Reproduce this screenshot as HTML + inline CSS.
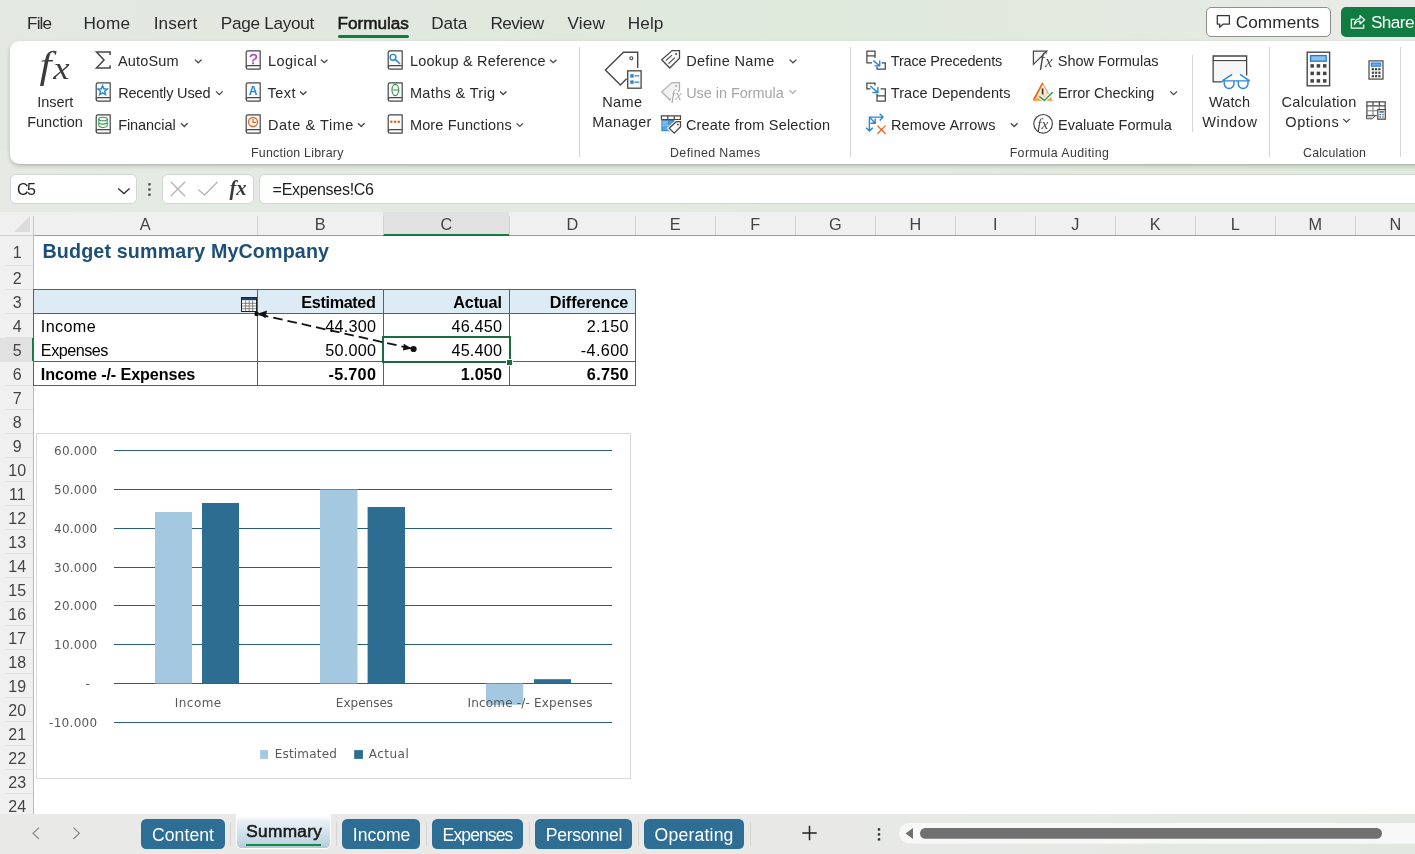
<!DOCTYPE html>
<html lang="en">
<head>
<meta charset="utf-8">
<title>Budget summary MyCompany - Excel</title>
<style>
html,body{margin:0;padding:0;}
body{width:1415px;height:854px;overflow:hidden;position:relative;background:linear-gradient(90deg,#e3e8e2 0%,#e2e8e0 22%,#dfe9dc 55%,#e3e9e0 80%,#e9ebe8 100%);font-family:"Liberation Sans",sans-serif;}
.t{position:absolute;white-space:pre;line-height:1;}
.a{position:absolute;}
svg{position:absolute;overflow:visible;}
/* ribbon */
#ribbon{left:10px;top:40.8px;width:1420px;height:123px;background:#fff;border-radius:9px 0 0 9px;box-shadow:0 2px 4px rgba(0,0,0,.20),0 1px 1px rgba(0,0,0,.06);}
.sep{width:1px;background:#d4d4d4;}
.tabul{left:338px;top:35px;width:70.5px;height:3px;border-radius:2px;background:#107c41;}
#comments{left:1206.4px;top:7.2px;width:122.4px;height:27.6px;border:1px solid #8e8e8e;border-radius:5px;background:#fff;}
#share{left:1341px;top:7.2px;width:90px;height:29.6px;border-radius:5px;background:#107c41;}
/* formula bar */
.fbox{background:#fff;border-radius:5.5px;top:174.3px;height:29.9px;box-shadow:inset 0 0 0 1px #d3d5d2;}
/* grid */
#gridbg{left:0;top:212px;width:1415px;height:602px;background:#fff;}
#colhdr{left:0;top:212px;width:1415px;height:23px;background:#f0f0f0;border-bottom:1px solid #9b9b9b;}
#rowhdr{left:0;top:236px;width:33px;height:578px;background:#f0f0f0;border-right:1px solid #b9b9b9;}
.cs{top:216px;width:1px;height:19px;background:#d2d2d2;}
.rs{left:6px;height:1px;width:27px;background:#e0e0e0;}
/* table */
.hl{height:1px;background:#2e6c97;}
.vl{width:1px;background:#2e6c97;}
/* sheet tabs */
#tabbar{left:0;top:814px;width:1415px;height:40px;background:linear-gradient(90deg,#e9e9e8 0%,#e8e9e7 60%,#e2e8e0 100%);}
.st{top:819px;height:30px;background:#2e6e95;border-radius:5.2px;}
.ts{top:822px;width:1px;height:24px;background:#d4d4d4;}
</style>
</head>
<body>
<!-- ===== ribbon tab strip ===== -->
<div class="a tabul"></div>
<div class="a" id="comments"></div>
<div class="a" id="share"></div>
<div class="a" style="left:0;top:150px;width:1415px;height:62px;background:linear-gradient(90deg,#e6e9e4 0%,#e4e9e2 45%,#dfe9dc 100%)"></div>
<!-- ===== ribbon ===== -->
<div class="a" id="ribbon"></div>
<div class="a sep" style="left:579px;top:47px;height:110px"></div>
<div class="a sep" style="left:850px;top:47px;height:110px"></div>
<div class="a sep" style="left:1192px;top:55px;height:77px"></div>
<div class="a sep" style="left:1269px;top:47px;height:110px"></div>
<div class="a sep" style="left:1400px;top:47px;height:110px"></div>
<!-- ===== formula bar ===== -->
<div class="a fbox" style="left:10.2px;width:126.8px"></div>
<div class="a fbox" style="left:162.4px;width:91.6px"></div>
<div class="a fbox" style="left:259.4px;width:1170px"></div>
<svg class="a" style="left:0;top:0;will-change:transform" width="1415" height="854" viewBox="0 0 1415 854" fill="none">
<path d="M110.2 82.8 H97.9 Q96.2 82.8 96.2 84.5 V99.4 Q96.2 101.1 98.0 101.1 H110.2 V82.8 Z" fill="#fbfbfb" stroke="#474747" stroke-width="1.2" stroke-linejoin="round"/><path d="M110.2 97.6 H98.2 Q96.2 97.6 96.2 99.4" stroke="#474747" stroke-width="1.2"/>
<path d="M110.2 114.8 H97.9 Q96.2 114.8 96.2 116.5 V131.4 Q96.2 133.1 98.0 133.1 H110.2 V114.8 Z" fill="#fbfbfb" stroke="#474747" stroke-width="1.2" stroke-linejoin="round"/><path d="M110.2 129.6 H98.2 Q96.2 129.6 96.2 131.4" stroke="#474747" stroke-width="1.2"/>
<path d="M260.2 50.8 H247.9 Q246.2 50.8 246.2 52.5 V67.4 Q246.2 69.1 248.0 69.1 H260.2 V50.8 Z" fill="#fbfbfb" stroke="#474747" stroke-width="1.2" stroke-linejoin="round"/><path d="M260.2 65.6 H248.2 Q246.2 65.6 246.2 67.4" stroke="#474747" stroke-width="1.2"/>
<path d="M260.2 82.8 H247.9 Q246.2 82.8 246.2 84.5 V99.4 Q246.2 101.1 248.0 101.1 H260.2 V82.8 Z" fill="#fbfbfb" stroke="#474747" stroke-width="1.2" stroke-linejoin="round"/><path d="M260.2 97.6 H248.2 Q246.2 97.6 246.2 99.4" stroke="#474747" stroke-width="1.2"/>
<path d="M260.2 114.8 H247.9 Q246.2 114.8 246.2 116.5 V131.4 Q246.2 133.1 248.0 133.1 H260.2 V114.8 Z" fill="#fbfbfb" stroke="#474747" stroke-width="1.2" stroke-linejoin="round"/><path d="M260.2 129.6 H248.2 Q246.2 129.6 246.2 131.4" stroke="#474747" stroke-width="1.2"/>
<path d="M402.2 50.8 H389.9 Q388.2 50.8 388.2 52.5 V67.4 Q388.2 69.1 390.0 69.1 H402.2 V50.8 Z" fill="#fbfbfb" stroke="#474747" stroke-width="1.2" stroke-linejoin="round"/><path d="M402.2 65.6 H390.2 Q388.2 65.6 388.2 67.4" stroke="#474747" stroke-width="1.2"/>
<path d="M402.2 82.8 H389.9 Q388.2 82.8 388.2 84.5 V99.4 Q388.2 101.1 390.0 101.1 H402.2 V82.8 Z" fill="#fbfbfb" stroke="#474747" stroke-width="1.2" stroke-linejoin="round"/><path d="M402.2 97.6 H390.2 Q388.2 97.6 388.2 99.4" stroke="#474747" stroke-width="1.2"/>
<path d="M402.2 114.8 H389.9 Q388.2 114.8 388.2 116.5 V131.4 Q388.2 133.1 390.0 133.1 H402.2 V114.8 Z" fill="#fbfbfb" stroke="#474747" stroke-width="1.2" stroke-linejoin="round"/><path d="M402.2 129.6 H390.2 Q388.2 129.6 388.2 131.4" stroke="#474747" stroke-width="1.2"/>
<path d="M110.1 55 V52.1 H96.5 L104 60.1 L96.5 68 H110.1 V65.2" stroke="#474747" stroke-width="1.5" stroke-linejoin="miter"/>
<polygon points="102.60,85.70 103.89,88.82 107.26,89.09 104.69,91.28 105.48,94.56 102.60,92.80 99.72,94.56 100.51,91.28 97.94,89.09 101.31,88.82" stroke="#2a86d6" stroke-width="1.4" stroke-linejoin="miter"/>
<path d="M98.8 119 V125.6 A4.2 1.8 0 0 0 107.2 125.6 V119 M98.8 122.3 A4.2 1.8 0 0 0 107.2 122.3" stroke="#2f9b50" stroke-width="1.05"/><ellipse cx="103" cy="119" rx="4.2" ry="1.8" stroke="#2f9b50" stroke-width="1.05"/>
<text x="253.2" y="63.7" font-family="Liberation Sans, sans-serif" font-size="15.5" fill="#a63fc6" stroke="#a63fc6" stroke-width="0.3" text-anchor="middle">?</text>
<text x="253.1" y="94.5" font-family="Liberation Sans, sans-serif" font-size="12.2" font-weight="bold" fill="#2a86d6" text-anchor="middle">A</text>
<circle cx="253" cy="122" r="4.5" stroke="#e8651c" stroke-width="1.3"/><path d="M253 119 V122.3 H256.2" stroke="#e8651c" stroke-width="1.2"/>
<circle cx="393" cy="57.3" r="2.9" stroke="#2a86d6" stroke-width="1.4"/><path d="M395.2 59.4 L399.6 63.5" stroke="#2a86d6" stroke-width="1.5" stroke-linecap="round"/>
<ellipse cx="395.3" cy="90" rx="3.3" ry="5.6" stroke="#2f9b50" stroke-width="1.2"/><path d="M393.2 90 H399.4" stroke="#8a8a8a" stroke-width="1.3"/>
<circle cx="391.4" cy="121.7" r="1.3" fill="#e8651c"/>
<circle cx="395.1" cy="121.7" r="1.3" fill="#e8651c"/>
<circle cx="398.8" cy="121.7" r="1.3" fill="#e8651c"/>
<path d="M195.0 59.6 L198.3 62.8 L201.6 59.6" stroke="#474747" stroke-width="1.3"/>
<path d="M216.0 91.4 L219.3 94.6 L222.6 91.4" stroke="#474747" stroke-width="1.3"/>
<path d="M181.0 123.3 L184.3 126.5 L187.6 123.3" stroke="#474747" stroke-width="1.3"/>
<path d="M321.0 59.7 L324.2 62.7 L327.4 59.7" stroke="#474747" stroke-width="1.3"/>
<path d="M300.0 91.5 L303.2 94.5 L306.4 91.5" stroke="#474747" stroke-width="1.3"/>
<path d="M358.0 123.3 L361.3 126.5 L364.6 123.3" stroke="#474747" stroke-width="1.3"/>
<path d="M550.0 59.7 L553.2 62.7 L556.5 59.7" stroke="#474747" stroke-width="1.3"/>
<path d="M500.0 91.5 L503.2 94.5 L506.4 91.5" stroke="#474747" stroke-width="1.3"/>
<path d="M516.6 123.4 L519.8 126.4 L523.0 123.4" stroke="#474747" stroke-width="1.3"/>
<path d="M789.6 59.6 L793.0 62.8 L796.4 59.6" stroke="#474747" stroke-width="1.3"/>
<path d="M789.4 90.2 L792.7 93.4 L796.0 90.2" stroke="#b0b0b0" stroke-width="1.3"/>
<path d="M1010.8 123.3 L1014.2 126.5 L1017.6 123.3" stroke="#474747" stroke-width="1.3"/>
<path d="M1170.2 91.4 L1173.6 94.6 L1177.0 91.4" stroke="#474747" stroke-width="1.3"/>
<path d="M1343.2 118.9 L1346.5 122.1 L1349.8 118.9" stroke="#474747" stroke-width="1.3"/>
<path d="M626.6 78.8 L620.4 84.9 L605.4 70 L623.5 52.2 H637.7 V68" stroke="#474747" stroke-width="1.4" stroke-linejoin="miter"/>
<circle cx="631.3" cy="58.3" r="1.5" stroke="#474747" stroke-width="1.1"/>
<rect x="627.7" y="70.8" width="13.4" height="17.4" fill="#fbfbfb" stroke="#474747" stroke-width="1.3"/>
<rect x="630.3" y="74.2" width="3.4" height="3.4" fill="#2a86d6"/><rect x="630.3" y="80.4" width="3.4" height="3.4" fill="#2a86d6"/>
<path d="M634.6 75.9 H639.3 M634.6 82.1 H639.3" stroke="#2a86d6" stroke-width="1.2"/>
<path d="M679.5 50.6 H672.1 L661.7 59.8 L669.8 68.0 L679.5 58.3 Z" fill="#fbfbfb" stroke="#474747" stroke-width="1.3" stroke-linejoin="miter"/><circle cx="676.1" cy="54.0" r="1.05" fill="#474747"/><path d="M665.9 60.6 L672.0 55.1 M668.5 63.6 L674.9 57.7" stroke="#474747" stroke-width="1.1"/>
<path d="M679.5 82.6 H672.1 L661.7 91.8 L669.8 100.0 L679.5 90.3 Z" fill="#f1f1f1" stroke="#b2b2b2" stroke-width="1.3" stroke-linejoin="miter"/><circle cx="676.1" cy="86.0" r="1.05" fill="#b2b2b2"/>
<text x="671.2" y="100.2" font-family="Liberation Serif, serif" font-style="italic" font-size="14.5" fill="#a8a8a8" stroke="#fff" stroke-width="2" paint-order="stroke">fx</text>
<rect x="661.4" y="119.6" width="12.8" height="11.6" fill="#1f78d1"/>
<path d="M661.4 125.4 H674 M667.8 119.6 V131.2" stroke="#8fc3ee" stroke-width="1"/>
<rect x="662.2" y="120.4" width="5" height="4.4" fill="#7db8ea"/><rect x="662.2" y="126" width="5" height="4.4" fill="#5aa4e4"/><rect x="668.4" y="120.4" width="5" height="4.4" fill="#4b9be0"/>
<path d="M661.4 119.6 V115.8 H680.5 V121.5 M661.4 119.6 H680.5 M667.8 115.8 V119.6 M674.3 115.8 V119.6" stroke="#474747" stroke-width="1.2"/>
<path d="M680.5 121.7 H676.2 L669.2 128.2 L674.2 133.2 L680.5 126.8 Z" fill="#fbfbfb" stroke="#fff" stroke-width="3.4"/>
<path d="M680.5 121.7 H676.2 L669.2 128.2 L674.2 133.2 L680.5 126.8 Z" fill="#fbfbfb" stroke="#474747" stroke-width="1.25"/>
<circle cx="677.9" cy="124.4" r="0.9" fill="#474747"/>
<path d="M872 62.9 H866.9 V51 H875 V58 M866.9 55.9 H875" stroke="#474747" stroke-width="1.25"/>
<path d="M881.6 62.9 H885.3 V69 H877.1 V66.6" stroke="#474747" stroke-width="1.25"/>
<path d="M873.4 60.6 L879.6 65.8 M879.7 60.6 V65.9 H874.4" stroke="#2a86d6" stroke-width="1.4"/>
<path d="M870.6 88.9 H866.9 V83.2 H875 V85.6" stroke="#474747" stroke-width="1.25"/>
<path d="M880.6 88.8 H885.3 V101 H877 V93.8 M877 95.9 H885.3" stroke="#474747" stroke-width="1.25"/>
<path d="M870.2 86 L877.8 92.4 M877.9 87 V92.5 H872.4" stroke="#2a86d6" stroke-width="1.4"/>
<path d="M869.4 131 V117.1 H882.6 M879.7 113.8 L883 117.1 L879.7 120.4 M866.1 127.8 L869.4 131.1 L872.7 127.8 M869.6 117.3 L875 123 M875.2 118.6 V123.2 H870.6" stroke="#2a86d6" stroke-width="1.4"/>
<path d="M877.4 125.6 L885.5 133.7 M885.5 125.6 L877.4 133.7" stroke="#e8651c" stroke-width="1.3"/>
<path d="M1033.4 51.2 H1046.9 L1033.4 64.4 Z" fill="#f3f3f3" stroke="#474747" stroke-width="1.2"/>
<text x="1039.6" y="66.0" font-family="Liberation Serif, serif" font-style="italic" fill="#4d4d4d"><tspan font-size="18.5">f</tspan><tspan font-size="17.2" dx="0.2" dy="0.9">x</tspan></text>
<defs><linearGradient id="eg" x1="0" y1="0" x2="0" y2="1"><stop offset="0" stop-color="#ffffff"/><stop offset="0.55" stop-color="#fdebd3"/><stop offset="1" stop-color="#f7be80"/></linearGradient></defs>
<path d="M1042.6 83.2 L1033.6 100 H1051.8 Z" fill="url(#eg)" stroke="#f0a050" stroke-width="1.2" stroke-linejoin="miter"/>
<path d="M1042.6 83.2 L1033.6 100" stroke="#e8651c" stroke-width="1.6"/>
<path d="M1033.6 100 H1051.8" stroke="#f3a043" stroke-width="1.5"/>
<path d="M1042.6 88.4 V94.4" stroke="#333" stroke-width="1.7"/>
<path d="M1039.4 96.6 L1044.5 100.4 L1052.6 92.2" stroke="#fff" stroke-width="3.6"/>
<path d="M1039.4 96.6 L1044.5 100.4 L1052.6 92.2" stroke="#2a8f4c" stroke-width="1.4"/>
<circle cx="1043.1" cy="123.8" r="9.3" stroke="#474747" stroke-width="1.2"/>
<text x="1037.3" y="128.6" font-family="Liberation Serif, serif" font-style="italic" font-size="15.5" fill="#474747">fx</text>
<path d="M1222.4 81.8 H1213.2 V56 H1246.6 V75.4 M1213.2 60.8 H1246.6" fill="none" stroke="#474747" stroke-width="1.4"/>
<path d="M1213.9 61.2 H1245.9 V75.4 L1240 74 L1232.2 74 L1222.4 81.2 H1213.9 Z" fill="#f7f7f7"/>
<path d="M1222.2 80.9 H1249.8 M1222.6 80.6 L1232.2 74.4 M1249.4 80.6 L1240 74.4" stroke="#2a86d6" stroke-width="1.4"/>
<path d="M1224.2 81 V83.6 A4.9 4.9 0 0 0 1234 83.6 V81 M1238.2 81 V83.6 A4.9 4.9 0 0 0 1248 83.6 V81" stroke="#2a86d6" stroke-width="1.4"/>
<rect x="1307.2" y="52.2" width="22.4" height="33.6" fill="#fcfcfc" stroke="#474747" stroke-width="1.4"/>
<rect x="1310.6" y="55.6" width="15.6" height="5.6" fill="#8fc1ea" stroke="#1f78d1" stroke-width="1.3"/>
<rect x="1310.45" y="64.15" width="3.5" height="3.5" fill="#444"/>
<rect x="1310.45" y="71.65" width="3.5" height="3.5" fill="#444"/>
<rect x="1310.45" y="79.15" width="3.5" height="3.5" fill="#444"/>
<rect x="1316.65" y="64.15" width="3.5" height="3.5" fill="#444"/>
<rect x="1316.65" y="71.65" width="3.5" height="3.5" fill="#444"/>
<rect x="1316.65" y="79.15" width="3.5" height="3.5" fill="#444"/>
<rect x="1322.95" y="64.15" width="3.5" height="3.5" fill="#444"/>
<rect x="1322.95" y="71.65" width="3.5" height="3.5" fill="#444"/>
<rect x="1322.95" y="79.15" width="3.5" height="3.5" fill="#444"/>
<rect x="1369.0" y="60.9" width="14.0" height="18.2" fill="#fcfcfc" stroke="#474747" stroke-width="1.2"/>
<rect x="1371.3" y="63" width="9.4" height="3.2" fill="#6fb0e6" stroke="#1f78d1" stroke-width="1"/>
<rect x="1371.80" y="68.10" width="2.2" height="2.2" fill="#444"/>
<rect x="1371.80" y="71.60" width="2.2" height="2.2" fill="#444"/>
<rect x="1371.80" y="75.10" width="2.2" height="2.2" fill="#444"/>
<rect x="1375.00" y="68.10" width="2.2" height="2.2" fill="#444"/>
<rect x="1375.00" y="71.60" width="2.2" height="2.2" fill="#444"/>
<rect x="1375.00" y="75.10" width="2.2" height="2.2" fill="#444"/>
<rect x="1378.30" y="68.10" width="2.2" height="2.2" fill="#444"/>
<rect x="1378.30" y="71.60" width="2.2" height="2.2" fill="#444"/>
<rect x="1378.30" y="75.10" width="2.2" height="2.2" fill="#444"/>
<path d="M1366.9 118.4 V101.9 H1385.2 V109 M1366.9 105.8 H1385.2 M1373 101.9 V105.8 M1379.3 101.9 V105.8" stroke="#474747" stroke-width="1.2"/>
<path d="M1366.9 110.7 H1377 M1366.9 115.6 H1377 M1373 105.8 V115.6 M1379.3 105.8 V109" stroke="#808080" stroke-width="1.1"/>
<path d="M1366.6 115.4 H1375.6 L1372.4 118.8 H1366.6 Z" fill="#d0d0d0" stroke="#555" stroke-width="1"/>
<rect x="1377.8" y="109.6" width="7.5" height="9.6" fill="#fcfcfc" stroke="#474747" stroke-width="1.2"/>
<rect x="1379.4" y="111" width="4.4" height="1.8" fill="#2a86d6"/>
<rect x="1379.50" y="113.90" width="1.4" height="1.4" fill="#555"/>
<rect x="1379.50" y="116.30" width="1.4" height="1.4" fill="#555"/>
<rect x="1382.30" y="113.90" width="1.4" height="1.4" fill="#555"/>
<rect x="1382.30" y="116.30" width="1.4" height="1.4" fill="#555"/>
<path d="M1217.3 15.7 H1229.4 V24 H1223.3 L1219.6 27.2 V24 H1217.3 Z" stroke="#333" stroke-width="1.25" stroke-linejoin="round"/>
<path d="M1354.6 19.4 H1351.4 V28.2 H1363.6 V24.6" stroke="#fff" stroke-width="1.3"/>
<path d="M1354.4 24.6 C1354.8 20.6 1357 18.6 1360 18.6 V15.6 L1364.6 19.8 L1360 24 V21 C1357.6 21 1355.8 22 1354.4 24.6 Z" stroke="#fff" stroke-width="1.2" stroke-linejoin="round"/>
<path d="M118.2 188.4 L123.9 193.6 L129.6 188.4" stroke="#333" stroke-width="1.35"/>
<rect x="148.3" y="183.15" width="2.3" height="2.3" fill="#444"/>
<rect x="148.3" y="188.35" width="2.3" height="2.3" fill="#444"/>
<rect x="148.3" y="193.55" width="2.3" height="2.3" fill="#444"/>
<path d="M170.7 181.8 L185.1 196.2 M185.1 181.8 L170.7 196.2" stroke="#b4b4b4" stroke-width="1.3"/>
<path d="M198.2 189.6 L204.6 195 L217.6 181.8" stroke="#b4b4b4" stroke-width="1.3"/>
<text x="229.4" y="194.6" font-family="Liberation Serif, serif" font-style="italic" font-weight="bold" font-size="20.5" fill="#3a3a3a">fx</text>
<text x="39.4" y="77.8" transform="translate(39.4 0) scale(1.13 1) translate(-39.4 0)" font-family="Liberation Serif, serif" font-style="italic" fill="#3c3c3c"><tspan font-size="38.5">f</tspan><tspan font-size="32.5" dx="1.6" dy="1.3">x</tspan></text>
</svg>
<!-- ===== grid ===== -->
<div class="a" id="gridbg"></div>
<div class="a" id="colhdr"></div>
<div class="a" id="rowhdr"></div>
<div class="a" style="left:383px;top:212px;width:126px;height:22px;background:#e1e1e1;border-bottom:2px solid #107c41"></div>
<div class="a" style="left:0;top:338px;width:32px;height:24px;background:#e1e1e1;border-right:2px solid #107c41"></div>
<svg class="a" style="left:8px;top:215px" width="24" height="19" viewBox="0 0 24 19"><path d="M22 1 V17 H6 Z" fill="#dcdcdc"/></svg>
<div class="a" style="left:33px;top:216px;width:1px;height:20px;background:#c8c8c8"></div><div class="a" style="left:0;top:235px;width:33px;height:1px;background:#cfcfcf"></div><div class="a cs" style="left:257px"></div><div class="a cs" style="left:383px"></div><div class="a cs" style="left:509px"></div><div class="a cs" style="left:635px"></div><div class="a cs" style="left:715px"></div><div class="a cs" style="left:795px"></div><div class="a cs" style="left:875px"></div><div class="a cs" style="left:955px"></div><div class="a cs" style="left:1035px"></div><div class="a cs" style="left:1115px"></div><div class="a cs" style="left:1195px"></div><div class="a cs" style="left:1275px"></div><div class="a cs" style="left:1355px"></div><div class="a rs" style="top:265px"></div><div class="a rs" style="top:289px"></div><div class="a rs" style="top:313px"></div><div class="a rs" style="top:337px"></div><div class="a rs" style="top:361px"></div><div class="a rs" style="top:385px"></div><div class="a rs" style="top:409px"></div><div class="a rs" style="top:433px"></div><div class="a rs" style="top:457px"></div><div class="a rs" style="top:481px"></div><div class="a rs" style="top:505px"></div><div class="a rs" style="top:529px"></div><div class="a rs" style="top:553px"></div><div class="a rs" style="top:577px"></div><div class="a rs" style="top:601px"></div><div class="a rs" style="top:625px"></div><div class="a rs" style="top:649px"></div><div class="a rs" style="top:673px"></div><div class="a rs" style="top:697px"></div><div class="a rs" style="top:721px"></div><div class="a rs" style="top:745px"></div><div class="a rs" style="top:769px"></div><div class="a rs" style="top:793px"></div><div class="a rs" style="top:817px"></div>
<!-- ===== table ===== -->
<div class="a" style="left:34px;top:290px;width:601px;height:23px;background:#ddebf4"></div>
<div class="a hl" style="left:33px;top:289px;width:603px"></div>
<div class="a hl" style="left:33px;top:313px;width:603px"></div>
<div class="a hl" style="left:33px;top:361px;width:603px"></div>
<div class="a hl" style="left:33px;top:385px;width:603px"></div>
<div class="a vl" style="left:33px;top:289px;height:97px"></div>
<div class="a vl" style="left:257px;top:289px;height:97px"></div>
<div class="a vl" style="left:383px;top:289px;height:97px"></div>
<div class="a vl" style="left:509px;top:289px;height:97px"></div>
<div class="a vl" style="left:635px;top:289px;height:97px"></div>
<!-- selected cell -->
<div class="a" style="left:382px;top:336px;width:125px;height:23px;border:2px solid #1b6b3f"></div>
<div class="a" style="left:505.5px;top:358.5px;width:5px;height:5px;background:#1b6b3f;border:1px solid #fff"></div>
<svg class="a" style="left:0;top:0" width="1415" height="854" viewBox="0 0 1415 854" fill="none">
<rect x="241.5" y="297.5" width="15" height="14" fill="#fff" stroke="#222" stroke-width="1"/>
<rect x="242" y="298" width="14" height="2.2" fill="#1f3f7a"/>
<path d="M242 303.3 H256 M242 306 H256 M242 308.7 H256 M245.7 300.5 V311 M249.2 300.5 V311 M252.7 300.5 V311" stroke="#666" stroke-width="0.8"/>
<path d="M257 314 L413.6 349" stroke="#111" stroke-width="1.8" stroke-dasharray="9.6 5.0" stroke-dashoffset="-2"/>
<circle cx="256.6" cy="313.9" r="2.3" fill="#111"/>
<path d="M258.4 313.6 L267 310.6 L265.6 318.2 Z" fill="#111"/>
<circle cx="413.6" cy="349" r="3.1" fill="#111"/>
<path d="M411.8 348.6 L403.8 343.8 L403 350.4 Z" fill="#111"/>
</svg>
<!-- ===== chart ===== -->
<div class="a" style="left:36px;top:433px;width:593px;height:344px;background:#fff;border:1px solid #d9d9d9"></div>
<svg class="a" style="left:0;top:0" width="1415" height="854" viewBox="0 0 1415 854"><line x1="113.5" x2="611.5" y1="450.5" y2="450.5" stroke="#2b5d83" stroke-width="1" shape-rendering="crispEdges"/><line x1="113.5" x2="611.5" y1="489.5" y2="489.5" stroke="#2b5d83" stroke-width="1" shape-rendering="crispEdges"/><line x1="113.5" x2="611.5" y1="528.5" y2="528.5" stroke="#2b5d83" stroke-width="1" shape-rendering="crispEdges"/><line x1="113.5" x2="611.5" y1="567.5" y2="567.5" stroke="#2b5d83" stroke-width="1" shape-rendering="crispEdges"/><line x1="113.5" x2="611.5" y1="605.5" y2="605.5" stroke="#2b5d83" stroke-width="1" shape-rendering="crispEdges"/><line x1="113.5" x2="611.5" y1="644.5" y2="644.5" stroke="#2b5d83" stroke-width="1" shape-rendering="crispEdges"/><line x1="113.5" x2="611.5" y1="683.5" y2="683.5" stroke="#2b5d83" stroke-width="1" shape-rendering="crispEdges"/><line x1="113.5" x2="611.5" y1="722.5" y2="722.5" stroke="#2b5d83" stroke-width="1" shape-rendering="crispEdges"/><rect x="155" y="512.0" width="37" height="171.5" fill="#a5c8e1"/><rect x="202" y="503.0" width="37" height="180.5" fill="#2e6d92"/><rect x="320" y="489.6" width="37.5" height="193.9" fill="#a5c8e1"/><rect x="367.6" y="507.0" width="37.39999999999998" height="176.5" fill="#2e6d92"/><rect x="486" y="683.5" width="37.200000000000045" height="21.3" fill="#a5c8e1"/><rect x="534" y="679.2" width="37" height="4.3" fill="#2e6d92"/><rect x="260.1" y="750.1" width="7.9" height="8.8" fill="#a5c8e1"/><rect x="354.2" y="750.1" width="8.7" height="8.8" fill="#2e6d92"/></svg>
<!-- ===== sheet tabs ===== -->
<div class="a" id="tabbar"></div>
<div class="a st" style="left:141px;width:84px"></div><div class="a st" style="left:342px;width:78px"></div><div class="a st" style="left:432px;width:91px"></div><div class="a st" style="left:535px;width:97px"></div><div class="a st" style="left:644px;width:99.5px"></div><div class="a" style="left:235.6px;top:812px;width:95.6px;height:37px;border-radius:0 0 6px 6px;background:#fff"></div><div class="a" style="left:236.8px;top:814px;width:93.4px;height:34px;border-radius:0 0 4.5px 4.5px;background:linear-gradient(#ffffff 0%,#ffffff 6%,#e6eff5 22%,#d3e1eb 55%,#c0d4e1 85%,#afc8d8 100%)"></div><div class="a" style="left:246px;top:843.9px;width:75px;height:2.2px;background:#138a45"></div><div class="a ts" style="left:230px"></div><div class="a ts" style="left:336px"></div><div class="a ts" style="left:426px"></div><div class="a ts" style="left:529px"></div><div class="a ts" style="left:638px"></div><div class="a ts" style="left:749.5px"></div><svg class="a" style="left:0;top:0" width="1415" height="854" viewBox="0 0 1415 854" fill="none"><path d="M39 827.6 L33 833.3 L39 839" stroke="#8c8c8c" stroke-width="1.25"/><path d="M73.4 827.6 L79.4 833.3 L73.4 839" stroke="#8c8c8c" stroke-width="1.25"/><path d="M802.3 833 H816.7 M809.5 825.8 V840.2" stroke="#222" stroke-width="1.5"/><rect x="877.8" y="828.2" width="2.4" height="2.4" fill="#333"/><rect x="877.8" y="833.2" width="2.4" height="2.4" fill="#333"/><rect x="877.8" y="838.2" width="2.4" height="2.4" fill="#333"/><rect x="899" y="823" width="540" height="20.5" rx="10.2" fill="#f7f8f7"/><path d="M913 828 V839 L905.6 833.4 Z" fill="#707070"/><rect x="920" y="828" width="462" height="10.8" rx="5.4" fill="#707070"/></svg>
<!-- ===== texts ===== -->
<div class="a" style="left:0;top:0;width:1415px;height:854px;will-change:transform"><span class="t" style="top:15.14px;font-size:17.2px;color:#2a2a2a;letter-spacing:-0.885px;left:27.03px;">File</span>
<span class="t" style="top:15.14px;font-size:17.2px;color:#2a2a2a;letter-spacing:0.263px;left:83.43px;">Home</span>
<span class="t" style="top:15.14px;font-size:17.2px;color:#2a2a2a;letter-spacing:0.090px;left:153.73px;">Insert</span>
<span class="t" style="top:15.14px;font-size:17.2px;color:#2a2a2a;letter-spacing:-0.318px;left:220.83px;">Page Layout</span>
<span class="t" style="top:15.14px;font-size:17.2px;color:#1a1a1a;letter-spacing:-0.028px;left:337.53px;-webkit-text-stroke:0.55px #1a1a1a;">Formulas</span>
<span class="t" style="top:15.14px;font-size:17.2px;color:#2a2a2a;letter-spacing:-0.088px;left:431.23px;">Data</span>
<span class="t" style="top:15.14px;font-size:17.2px;color:#2a2a2a;letter-spacing:-0.542px;left:490.43px;">Review</span>
<span class="t" style="top:15.14px;font-size:17.2px;color:#2a2a2a;letter-spacing:0.198px;left:567.43px;">View</span>
<span class="t" style="top:15.14px;font-size:17.2px;color:#2a2a2a;letter-spacing:0.063px;left:627.83px;">Help</span>
<span class="t" style="top:13.94px;font-size:17.2px;color:#2a2a2a;letter-spacing:0.079px;left:1235.73px;">Comments</span>
<span class="t" style="top:13.94px;font-size:17.2px;color:#fff;letter-spacing:-0.557px;left:1370.93px;">Share</span>
<span class="t" style="top:94.73px;font-size:14.5px;color:#2a2a2a;letter-spacing:-0.032px;left:37.15px;">Insert</span>
<span class="t" style="top:114.93px;font-size:14.5px;color:#2a2a2a;letter-spacing:0.011px;left:27.15px;">Function</span>
<span class="t" style="top:53.93px;font-size:14.5px;color:#2a2a2a;letter-spacing:0.175px;left:117.95px;">AutoSum</span>
<span class="t" style="top:85.83px;font-size:14.5px;color:#2a2a2a;letter-spacing:-0.166px;left:118.15px;">Recently Used</span>
<span class="t" style="top:117.73px;font-size:14.5px;color:#2a2a2a;letter-spacing:-0.066px;left:118.15px;">Financial</span>
<span class="t" style="top:53.93px;font-size:14.5px;color:#2a2a2a;letter-spacing:0.459px;left:267.95px;">Logical</span>
<span class="t" style="top:85.83px;font-size:14.5px;color:#2a2a2a;letter-spacing:0.504px;left:267.55px;">Text</span>
<span class="t" style="top:117.73px;font-size:14.5px;color:#2a2a2a;letter-spacing:0.572px;left:267.95px;">Date &amp; Time</span>
<span class="t" style="top:53.93px;font-size:14.5px;color:#2a2a2a;letter-spacing:0.206px;left:409.95px;">Lookup &amp; Reference</span>
<span class="t" style="top:85.83px;font-size:14.5px;color:#2a2a2a;letter-spacing:0.347px;left:409.95px;">Maths &amp; Trig</span>
<span class="t" style="top:117.73px;font-size:14.5px;color:#2a2a2a;letter-spacing:0.136px;left:409.95px;">More Functions</span>
<span class="t" style="top:94.73px;font-size:14.5px;color:#2a2a2a;letter-spacing:0.406px;left:602.15px;">Name</span>
<span class="t" style="top:114.93px;font-size:14.5px;color:#2a2a2a;letter-spacing:0.345px;left:592.15px;">Manager</span>
<span class="t" style="top:53.93px;font-size:14.5px;color:#2a2a2a;letter-spacing:0.348px;left:686.15px;">Define Name</span>
<span class="t" style="top:85.83px;font-size:14.5px;color:#a6a6a6;letter-spacing:-0.047px;left:686.15px;">Use in Formula</span>
<span class="t" style="top:117.73px;font-size:14.5px;color:#2a2a2a;letter-spacing:0.189px;left:685.95px;">Create from Selection</span>
<span class="t" style="top:53.93px;font-size:14.5px;color:#2a2a2a;letter-spacing:-0.160px;left:890.75px;">Trace Precedents</span>
<span class="t" style="top:85.83px;font-size:14.5px;color:#2a2a2a;letter-spacing:0.063px;left:890.75px;">Trace Dependents</span>
<span class="t" style="top:117.73px;font-size:14.5px;color:#2a2a2a;letter-spacing:0.180px;left:890.95px;">Remove Arrows</span>
<span class="t" style="top:53.93px;font-size:14.5px;color:#2a2a2a;letter-spacing:-0.002px;left:1057.75px;">Show Formulas</span>
<span class="t" style="top:85.83px;font-size:14.5px;color:#2a2a2a;letter-spacing:-0.031px;left:1057.95px;">Error Checking</span>
<span class="t" style="top:117.73px;font-size:14.5px;color:#2a2a2a;letter-spacing:0.018px;left:1057.95px;">Evaluate Formula</span>
<span class="t" style="top:94.73px;font-size:14.5px;color:#2a2a2a;letter-spacing:0.136px;left:1208.95px;">Watch</span>
<span class="t" style="top:114.93px;font-size:14.5px;color:#2a2a2a;letter-spacing:0.665px;left:1202.15px;">Window</span>
<span class="t" style="top:94.73px;font-size:14.5px;color:#2a2a2a;letter-spacing:0.295px;left:1281.55px;">Calculation</span>
<span class="t" style="top:114.93px;font-size:14.5px;color:#2a2a2a;letter-spacing:0.553px;left:1285.35px;">Options</span>
<span class="t" style="top:146.70px;font-size:12.4px;color:#3a3a3a;letter-spacing:0.231px;left:251.04px;">Function Library</span>
<span class="t" style="top:146.70px;font-size:12.4px;color:#3a3a3a;letter-spacing:0.392px;left:670.04px;">Defined Names</span>
<span class="t" style="top:146.70px;font-size:12.4px;color:#3a3a3a;letter-spacing:0.422px;left:1009.64px;">Formula Auditing</span>
<span class="t" style="top:146.70px;font-size:12.4px;color:#3a3a3a;letter-spacing:0.160px;left:1303.04px;">Calculation</span>
<span class="t" style="top:181.76px;font-size:16.0px;color:#222;letter-spacing:-1.500px;left:16.88px;">C5</span>
<span class="t" style="top:181.76px;font-size:16.0px;color:#1c1c1c;letter-spacing:-0.280px;left:272.58px;">=Expenses!C6</span>
<span class="t" style="top:216.40px;font-size:16.3px;color:#444;left:145.27px;transform:translateX(-50%);">A</span>
<span class="t" style="top:216.40px;font-size:16.3px;color:#444;left:320.27px;transform:translateX(-50%);">B</span>
<span class="t" style="top:216.40px;font-size:16.3px;color:#444;left:446.27px;transform:translateX(-50%);">C</span>
<span class="t" style="top:216.40px;font-size:16.3px;color:#444;left:572.27px;transform:translateX(-50%);">D</span>
<span class="t" style="top:216.40px;font-size:16.3px;color:#444;left:675.27px;transform:translateX(-50%);">E</span>
<span class="t" style="top:216.40px;font-size:16.3px;color:#444;left:755.27px;transform:translateX(-50%);">F</span>
<span class="t" style="top:216.40px;font-size:16.3px;color:#444;left:835.27px;transform:translateX(-50%);">G</span>
<span class="t" style="top:216.40px;font-size:16.3px;color:#444;left:915.27px;transform:translateX(-50%);">H</span>
<span class="t" style="top:216.40px;font-size:16.3px;color:#444;left:995.27px;transform:translateX(-50%);">I</span>
<span class="t" style="top:216.40px;font-size:16.3px;color:#444;left:1075.27px;transform:translateX(-50%);">J</span>
<span class="t" style="top:216.40px;font-size:16.3px;color:#444;left:1155.27px;transform:translateX(-50%);">K</span>
<span class="t" style="top:216.40px;font-size:16.3px;color:#444;left:1235.27px;transform:translateX(-50%);">L</span>
<span class="t" style="top:216.40px;font-size:16.3px;color:#444;left:1315.27px;transform:translateX(-50%);">M</span>
<span class="t" style="top:216.40px;font-size:16.3px;color:#444;left:1395.27px;transform:translateX(-50%);">N</span>
<span class="t" style="top:245.16px;font-size:16.0px;color:#444;left:17.28px;transform:translateX(-50%);">1</span>
<span class="t" style="top:270.66px;font-size:16.0px;color:#444;left:17.28px;transform:translateX(-50%);">2</span>
<span class="t" style="top:294.66px;font-size:16.0px;color:#444;left:17.28px;transform:translateX(-50%);">3</span>
<span class="t" style="top:318.66px;font-size:16.0px;color:#444;left:17.28px;transform:translateX(-50%);">4</span>
<span class="t" style="top:342.66px;font-size:16.0px;color:#444;left:17.28px;transform:translateX(-50%);">5</span>
<span class="t" style="top:366.66px;font-size:16.0px;color:#444;left:17.28px;transform:translateX(-50%);">6</span>
<span class="t" style="top:390.66px;font-size:16.0px;color:#444;left:17.28px;transform:translateX(-50%);">7</span>
<span class="t" style="top:414.66px;font-size:16.0px;color:#444;left:17.28px;transform:translateX(-50%);">8</span>
<span class="t" style="top:438.66px;font-size:16.0px;color:#444;left:17.28px;transform:translateX(-50%);">9</span>
<span class="t" style="top:462.66px;font-size:16.0px;color:#444;left:17.28px;transform:translateX(-50%);">10</span>
<span class="t" style="top:486.66px;font-size:16.0px;color:#444;left:17.28px;transform:translateX(-50%);">11</span>
<span class="t" style="top:510.66px;font-size:16.0px;color:#444;left:17.28px;transform:translateX(-50%);">12</span>
<span class="t" style="top:534.66px;font-size:16.0px;color:#444;left:17.28px;transform:translateX(-50%);">13</span>
<span class="t" style="top:558.66px;font-size:16.0px;color:#444;left:17.28px;transform:translateX(-50%);">14</span>
<span class="t" style="top:582.66px;font-size:16.0px;color:#444;left:17.28px;transform:translateX(-50%);">15</span>
<span class="t" style="top:606.66px;font-size:16.0px;color:#444;left:17.28px;transform:translateX(-50%);">16</span>
<span class="t" style="top:630.66px;font-size:16.0px;color:#444;left:17.28px;transform:translateX(-50%);">17</span>
<span class="t" style="top:654.66px;font-size:16.0px;color:#444;left:17.28px;transform:translateX(-50%);">18</span>
<span class="t" style="top:678.66px;font-size:16.0px;color:#444;left:17.28px;transform:translateX(-50%);">19</span>
<span class="t" style="top:702.66px;font-size:16.0px;color:#444;left:17.28px;transform:translateX(-50%);">20</span>
<span class="t" style="top:726.66px;font-size:16.0px;color:#444;left:17.28px;transform:translateX(-50%);">21</span>
<span class="t" style="top:750.66px;font-size:16.0px;color:#444;left:17.28px;transform:translateX(-50%);">22</span>
<span class="t" style="top:774.66px;font-size:16.0px;color:#444;left:17.28px;transform:translateX(-50%);">23</span>
<span class="t" style="top:798.66px;font-size:16.0px;color:#444;left:17.28px;transform:translateX(-50%);">24</span>
<span class="t" style="top:242.12px;font-size:19.7px;color:#1e5076;font-weight:bold;letter-spacing:0.140px;left:42.51px;">Budget summary MyCompany</span>
<span class="t" style="top:293.89px;font-size:16.2px;color:#000;font-weight:bold;letter-spacing:-0.352px;left:301.37px;">Estimated</span>
<span class="t" style="top:293.89px;font-size:16.2px;color:#000;font-weight:bold;letter-spacing:-0.165px;left:453.27px;">Actual</span>
<span class="t" style="top:293.89px;font-size:16.2px;color:#000;font-weight:bold;letter-spacing:-0.068px;left:549.77px;">Difference</span>
<span class="t" style="top:317.89px;font-size:16.2px;color:#000;letter-spacing:0.353px;left:40.87px;">Income</span>
<span class="t" style="top:341.89px;font-size:16.2px;color:#000;letter-spacing:-0.519px;left:40.87px;">Expenses</span>
<span class="t" style="top:365.89px;font-size:16.2px;color:#000;font-weight:bold;letter-spacing:-0.116px;left:40.87px;">Income -/- Expenses</span>
<span class="t" style="top:317.89px;font-size:16.2px;color:#000;letter-spacing:0.228px;left:325.27px;">44.300</span>
<span class="t" style="top:341.89px;font-size:16.2px;color:#000;letter-spacing:0.228px;left:325.27px;">50.000</span>
<span class="t" style="top:365.89px;font-size:16.2px;color:#000;font-weight:bold;letter-spacing:0.310px;left:328.47px;">-5.700</span>
<span class="t" style="top:317.89px;font-size:16.2px;color:#000;letter-spacing:0.188px;left:451.47px;">46.450</span>
<span class="t" style="top:341.89px;font-size:16.2px;color:#000;letter-spacing:0.188px;left:451.47px;">45.400</span>
<span class="t" style="top:365.89px;font-size:16.2px;color:#000;font-weight:bold;letter-spacing:0.136px;left:460.87px;">1.050</span>
<span class="t" style="top:317.89px;font-size:16.2px;color:#000;letter-spacing:0.336px;left:586.67px;">2.150</span>
<span class="t" style="top:341.89px;font-size:16.2px;color:#000;letter-spacing:0.350px;left:580.87px;">-4.600</span>
<span class="t" style="top:365.89px;font-size:16.2px;color:#000;font-weight:bold;letter-spacing:0.286px;left:586.87px;">6.750</span>
<span class="t" style="top:444.84px;font-size:12.0px;color:#595959;font-family:'DejaVu Sans', sans-serif;letter-spacing:0.216px;left:54.06px;">60.000</span>
<span class="t" style="top:483.84px;font-size:12.0px;color:#595959;font-family:'DejaVu Sans', sans-serif;letter-spacing:0.216px;left:54.06px;">50.000</span>
<span class="t" style="top:522.84px;font-size:12.0px;color:#595959;font-family:'DejaVu Sans', sans-serif;letter-spacing:0.216px;left:54.06px;">40.000</span>
<span class="t" style="top:561.84px;font-size:12.0px;color:#595959;font-family:'DejaVu Sans', sans-serif;letter-spacing:0.216px;left:54.06px;">30.000</span>
<span class="t" style="top:599.84px;font-size:12.0px;color:#595959;font-family:'DejaVu Sans', sans-serif;letter-spacing:0.216px;left:54.06px;">20.000</span>
<span class="t" style="top:638.84px;font-size:12.0px;color:#595959;font-family:'DejaVu Sans', sans-serif;letter-spacing:0.216px;left:54.06px;">10.000</span>
<span class="t" style="top:677.84px;font-size:12.0px;color:#595959;font-family:'DejaVu Sans', sans-serif;left:85.46px;">-</span>
<span class="t" style="top:716.84px;font-size:12.0px;color:#595959;font-family:'DejaVu Sans', sans-serif;letter-spacing:0.292px;left:49.06px;">-10.000</span>
<span class="t" style="top:696.84px;font-size:12.0px;color:#595959;font-family:'DejaVu Sans', sans-serif;letter-spacing:0.425px;left:174.86px;">Income</span>
<span class="t" style="top:696.84px;font-size:12.0px;color:#595959;font-family:'DejaVu Sans', sans-serif;letter-spacing:0.013px;left:335.86px;">Expenses</span>
<span class="t" style="top:696.84px;font-size:12.0px;color:#595959;font-family:'DejaVu Sans', sans-serif;letter-spacing:0.189px;left:467.46px;">Income -/- Expenses</span>
<span class="t" style="top:748.04px;font-size:12.0px;color:#595959;font-family:'DejaVu Sans', sans-serif;letter-spacing:0.207px;left:274.66px;">Estimated</span>
<span class="t" style="top:748.04px;font-size:12.0px;color:#595959;font-family:'DejaVu Sans', sans-serif;letter-spacing:0.497px;left:368.66px;">Actual</span>
<span class="t" style="top:827.10px;font-size:17.6px;color:#fff;letter-spacing:0.060px;left:152.01px;">Content</span>
<span class="t" style="top:823.36px;font-size:17.3px;color:#1a1a1a;letter-spacing:0.303px;left:246.22px;-webkit-text-stroke:0.55px #1a1a1a;">Summary</span>
<span class="t" style="top:827.10px;font-size:17.6px;color:#fff;letter-spacing:-0.024px;left:352.81px;">Income</span>
<span class="t" style="top:827.10px;font-size:17.6px;color:#fff;letter-spacing:-0.926px;left:442.61px;">Expenses</span>
<span class="t" style="top:827.10px;font-size:17.6px;color:#fff;letter-spacing:-0.331px;left:545.81px;">Personnel</span>
<span class="t" style="top:827.10px;font-size:17.6px;color:#fff;letter-spacing:0.190px;left:654.61px;">Operating</span></div>
</body>
</html>
